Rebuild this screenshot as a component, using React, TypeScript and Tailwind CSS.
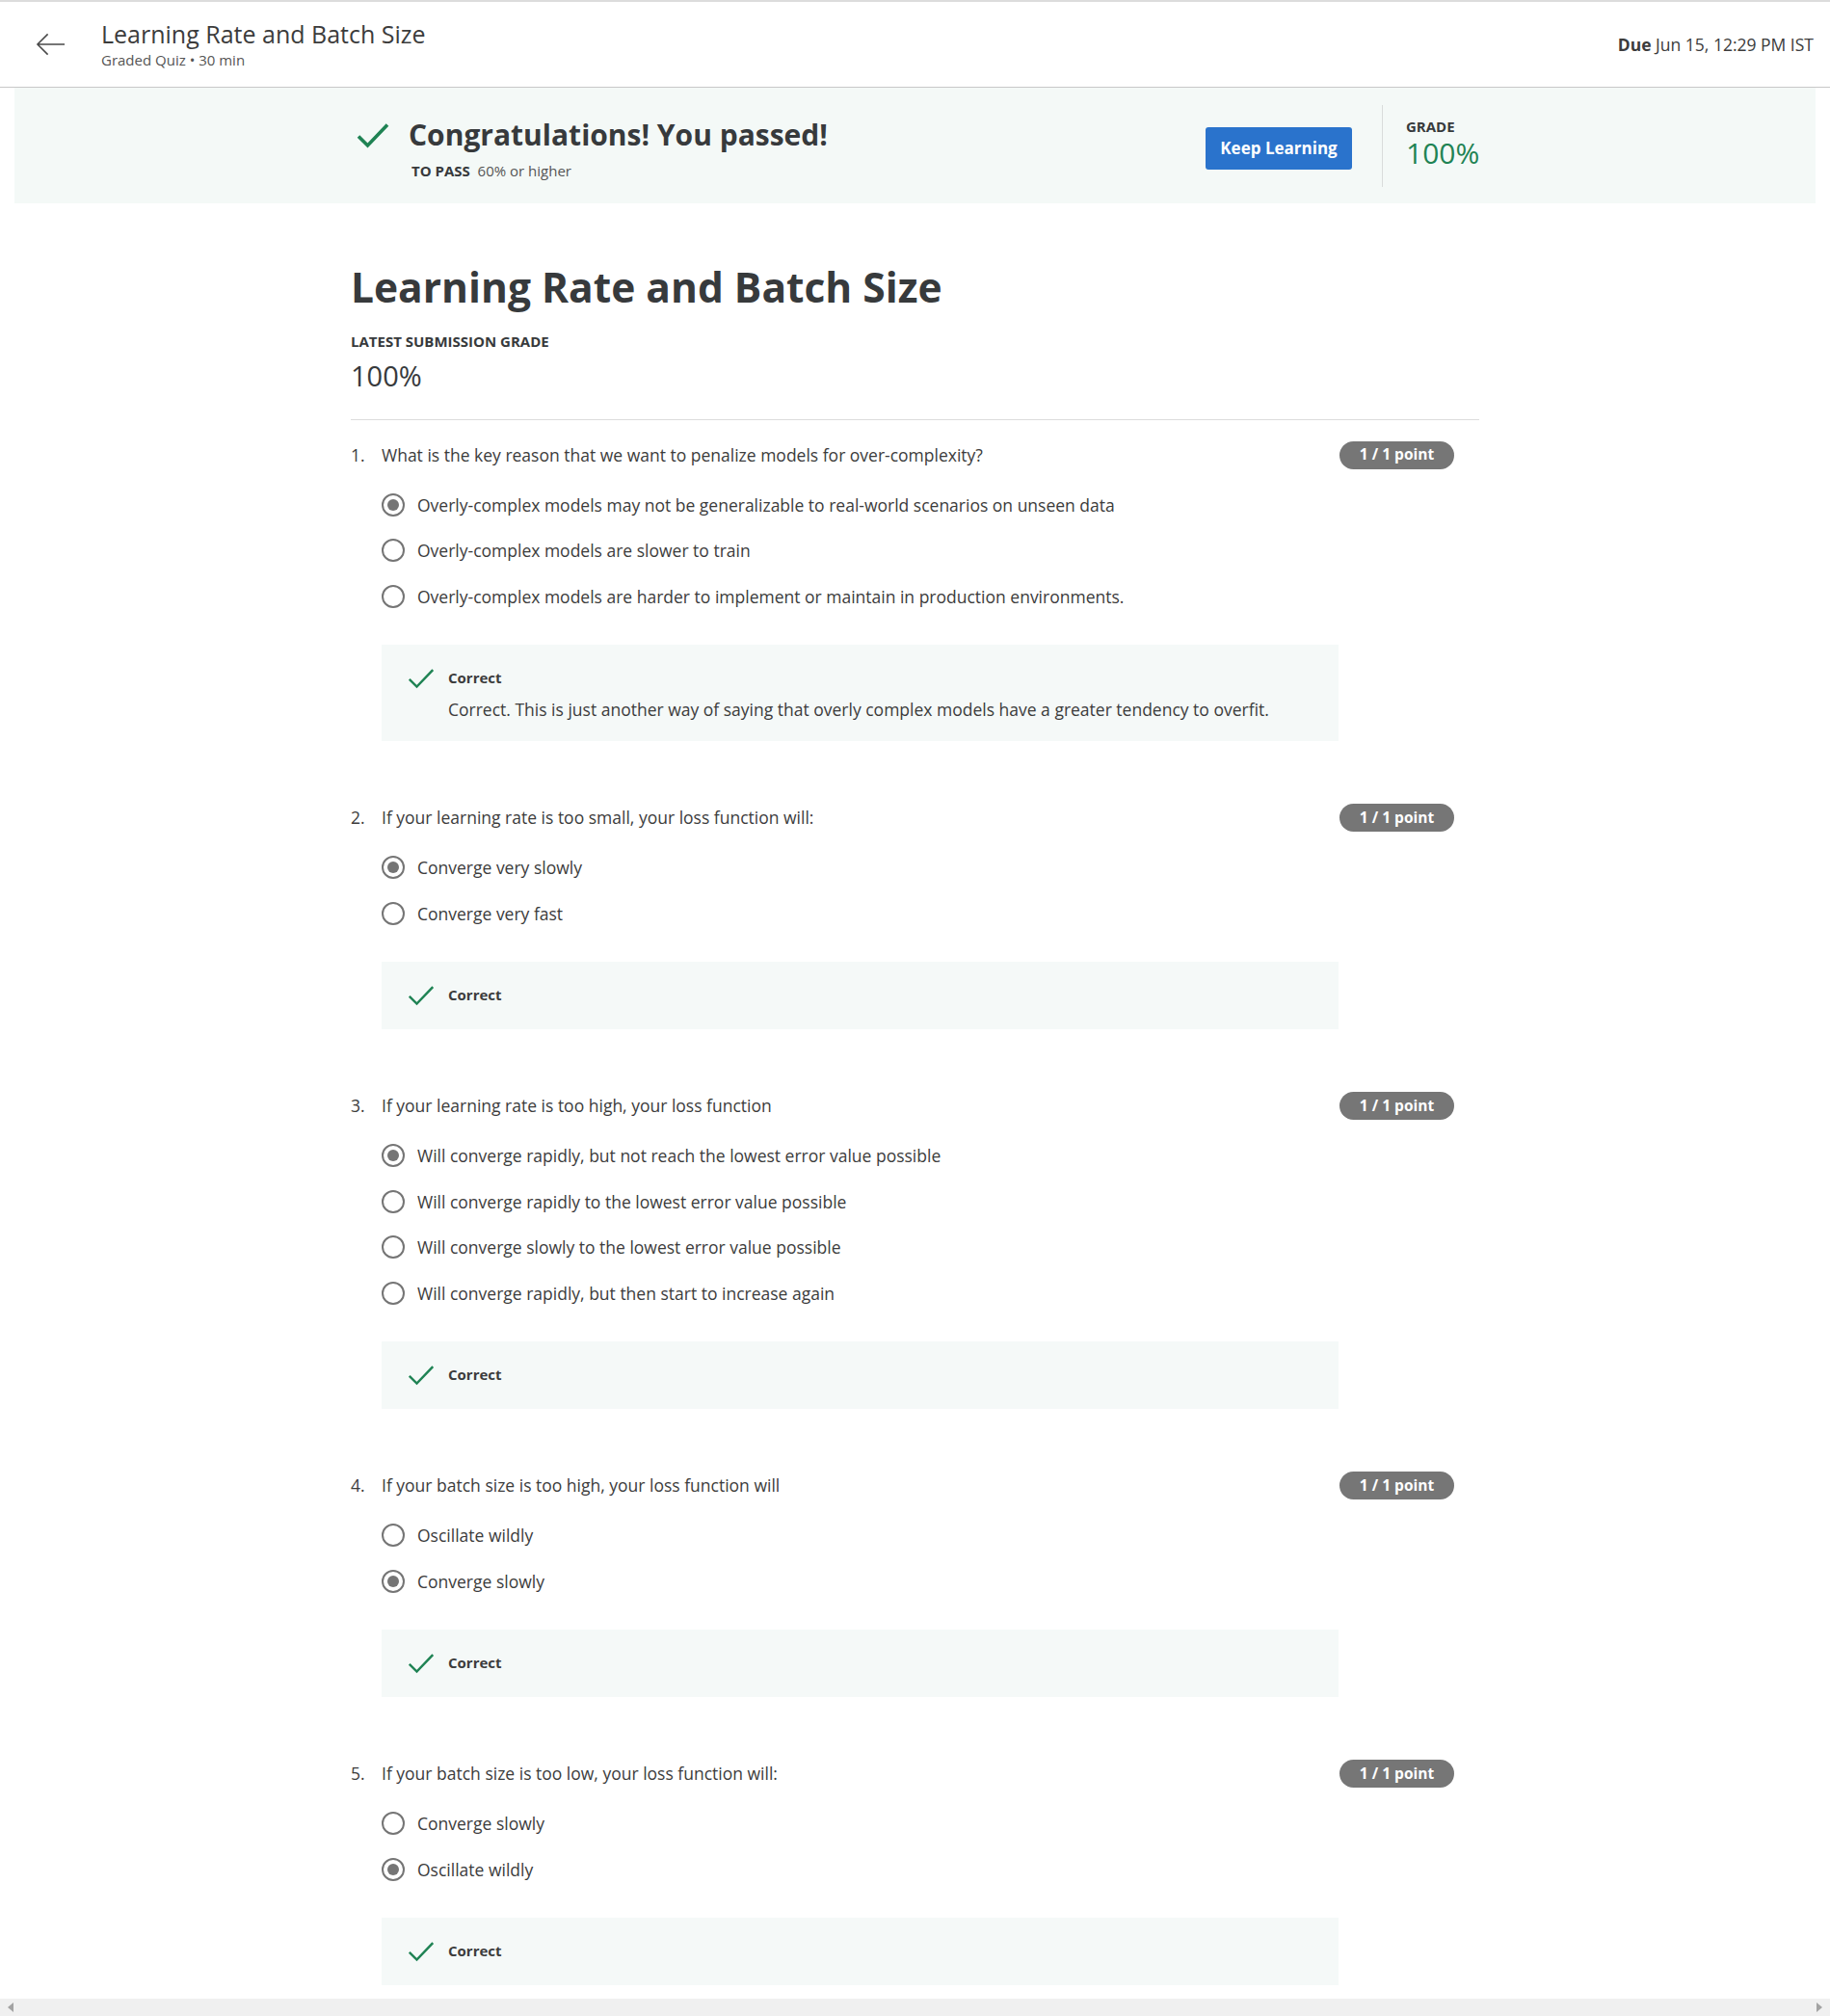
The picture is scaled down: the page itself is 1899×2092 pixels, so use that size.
import React from "react";

type Question = {
  text: string;
  options: string[];
  selected: number;
  explanation?: string;
};

const questions: Question[] = [
  {
    text: "What is the key reason that we want to penalize models for over-complexity?",
    options: [
      "Overly-complex models may not be generalizable to real-world scenarios on unseen data",
      "Overly-complex models are slower to train",
      "Overly-complex models are harder to implement or maintain in production environments.",
    ],
    selected: 0,
    explanation:
      "Correct. This is just another way of saying that overly complex models have a greater tendency to overfit.",
  },
  {
    text: "If your learning rate is too small, your loss function will:",
    options: ["Converge very slowly", "Converge very fast"],
    selected: 0,
  },
  {
    text: "If your learning rate is too high, your loss function",
    options: [
      "Will converge rapidly, but not reach the lowest error value possible",
      "Will converge rapidly to the lowest error value possible",
      "Will converge slowly to the lowest error value possible",
      "Will converge rapidly, but then start to increase again",
    ],
    selected: 0,
  },
  {
    text: "If your batch size is too high, your loss function will",
    options: ["Oscillate wildly", "Converge slowly"],
    selected: 1,
  },
  {
    text: "If your batch size is too low, your loss function will:",
    options: ["Converge slowly", "Oscillate wildly"],
    selected: 1,
  },
];

const Check: React.FC<{ className?: string; width?: number }> = ({ className, width = 3 }) => (
  <svg viewBox="0 0 34 27" className={className} fill="none">
    <path d="M2 14.5 L11.5 24 L32 2.5" stroke="#1f8354" strokeWidth={width} />
  </svg>
);

const Radio: React.FC<{ checked: boolean }> = ({ checked }) => (
  <span className="flex h-[24px] w-[24px] shrink-0 items-center justify-center rounded-full border-[2px] border-[#757575] bg-white">
    {checked && <span className="h-[12px] w-[12px] rounded-full bg-[#757575]" />}
  </span>
);

const QuestionBlock: React.FC<{ q: Question; index: number }> = ({ q, index }) => (
  <div className="flex">
    <div className="w-[32px] shrink-0 text-[17.5px] leading-[32px] text-[#3c3c3c]">{index + 1}.</div>
    <div className="w-[993px] shrink-0">
      <p className="text-[17.5px] leading-[32px] text-[#3c3c3c]">{q.text}</p>
      <div className="mt-[20px] flex flex-col gap-[15.5px]">
        {q.options.map((o, i) => (
          <div key={i} className="flex h-[32px] items-center gap-[13px]">
            <Radio checked={i === q.selected} />
            <span className="text-[17.5px] leading-[32px] text-[#3c3c3c]">{o}</span>
          </div>
        ))}
      </div>
      <div
        className={`mt-[34px] bg-[#f5f9f8] px-[27px] ${q.explanation ? "pb-[17px] pt-[19px]" : "py-[19px]"}`}
      >
        <div className="flex h-[32px] items-center gap-[14px]">
          <Check className="h-[22px] w-[28px]" width={3} />
          <span className="text-[15px] font-bold text-[#3c3c3c]">Correct</span>
        </div>
        {q.explanation && (
          <p className="pl-[42px] text-[17.5px] leading-[32px] text-[#3c3c3c]">{q.explanation}</p>
        )}
      </div>
    </div>
    <div className="ml-[1px] mt-[2px]">
      <span className="flex h-[29px] w-[119px] items-center justify-center rounded-full bg-[#767676] text-[15.5px] font-bold text-white">
        1 / 1 point
      </span>
    </div>
  </div>
);

export default function App() {
  return (
    <div
      className="flex h-[2092px] flex-col overflow-hidden bg-white text-[#3c3c3c]"
      style={{ fontFamily: '"Open Sans", "Noto Sans", Arial, sans-serif' }}
    >
      {/* Top header */}
      <header className="flex h-[91px] shrink-0 items-center border-b border-t-[2px] border-b-[#c8c8c8] border-t-[#dcdcdc] pl-[37px] pr-[17px]">
        <svg viewBox="0 0 32 26" className="h-[26px] w-[31px]" fill="none">
          <path d="M31 13 H2 M13 2 L2 13 L13 24" stroke="#4a4a4a" strokeWidth="1.6" />
        </svg>
        <div className="ml-[37px] flex flex-col">
          <span className="text-[25px] leading-[32px] text-[#3c3c3c]">Learning Rate and Batch Size</span>
          <span className="text-[15px] leading-[22px] text-[#555]">Graded Quiz • 30 min</span>
        </div>
        <div className="ml-auto text-[17.5px] text-[#3c3c3c]">
          <span className="font-bold">Due</span> Jun 15, 12:29 PM IST
        </div>
      </header>

      {/* Pass banner */}
      <div className="mx-[15px] flex h-[120px] shrink-0 items-center bg-[#f4f9f7]">
        <div className="mx-auto flex w-[1171px] items-center pl-[6px]">
          <Check className="mt-[18px] h-[27px] w-[34px] self-start" width={3.6} />
          <div className="ml-[20px] mt-[5px] flex flex-col">
            <span className="text-[30px] font-bold leading-[42px] text-[#373a3c]">
              Congratulations! You passed!
            </span>
            <span className="mt-[5px] pl-[3px] text-[15px] text-[#555]">
              <span className="font-bold text-[#373a3c]">TO PASS</span>&nbsp; 60% or higher
            </span>
          </div>
          <button className="ml-auto mt-[6px] h-[44px] w-[152px] rounded-[3px] bg-[#2a73cc] text-[17px] font-bold text-white">
            Keep Learning
          </button>
          <div className="ml-[31px] h-[85px] w-px bg-[#d9dcdb]" />
          <div className="ml-[24px] mt-[-4px] flex w-[76px] flex-col">
            <span className="text-[15px] font-bold leading-[20px] text-[#373a3c]">GRADE</span>
            <span className="text-[30px] leading-[36px] text-[#1f8354]">100%</span>
          </div>
        </div>
      </div>

      {/* Main content */}
      <main className="mx-auto w-[1171px] flex-1">
        <h1 className="mt-[59px] text-[42.5px] font-bold leading-[56px] text-[#373a3c]">
          Learning Rate and Batch Size
        </h1>
        <div className="mt-[18px] text-[15px] font-bold leading-[20px] text-[#373a3c]">
          LATEST SUBMISSION GRADE
        </div>
        <div className="mt-[8px] text-[29px] leading-[36px] text-[#373a3c]">100%</div>
        <div className="mt-[26.5px] h-px bg-[#dcdcdc]" />
        <div className="mt-[20px] flex flex-col gap-[63.5px]">
          {questions.map((q, i) => (
            <QuestionBlock key={i} q={q} index={i} />
          ))}
        </div>
      </main>

      {/* Horizontal scrollbar */}
      <div className="flex h-[18px] shrink-0 items-center justify-between bg-[#f0f0f0] px-[8px]">
        <svg viewBox="0 0 6 10" className="h-[10px] w-[6px]">
          <path d="M6 0 L0 5 L6 10 Z" fill="#a3a3a3" />
        </svg>
        <svg viewBox="0 0 6 10" className="h-[10px] w-[6px]">
          <path d="M0 0 L6 5 L0 10 Z" fill="#a3a3a3" />
        </svg>
      </div>
    </div>
  );
}
